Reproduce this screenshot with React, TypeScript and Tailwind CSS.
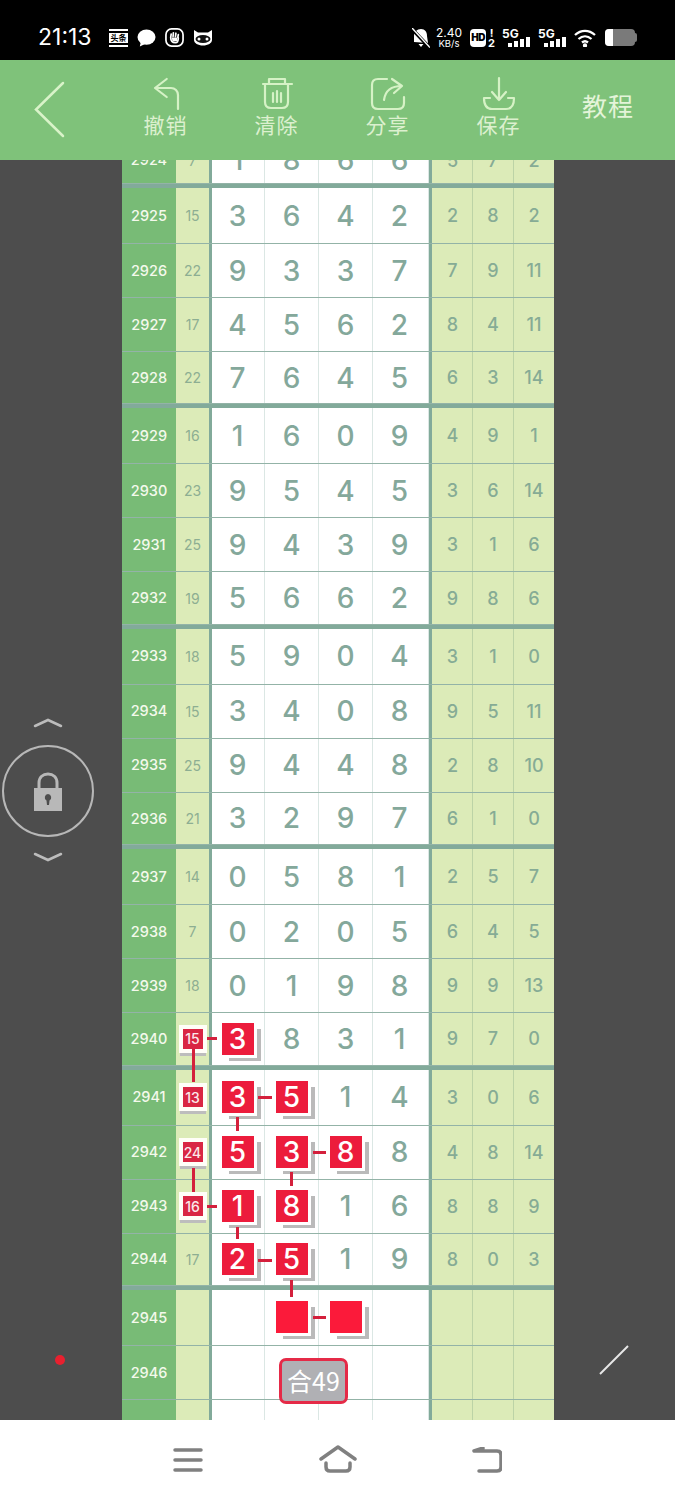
import type { ReactNode } from 'react'

const CJK = "font-['Noto_Sans_CJK_SC',sans-serif]"

type Row = { no: number; sum?: number; sumMark?: boolean; digits: (number | null)[]; marks?: number[]; right: (number | null)[] }

const r = (no: number, sum: number | undefined, d: (number | null)[], right: (number | null)[], marks: number[] = [], sumMark = false): Row => ({
  no,
  sum,
  sumMark,
  digits: d,
  marks,
  right,
})

const blank = [null, null, null, null]
const blankRight = [null, null, null]

const topRow = r(2924, 7, [1, 8, 6, 6], [5, 7, 2])

const groups: Row[][] = [
  [
    r(2925, 15, [3, 6, 4, 2], [2, 8, 2]),
    r(2926, 22, [9, 3, 3, 7], [7, 9, 11]),
    r(2927, 17, [4, 5, 6, 2], [8, 4, 11]),
    r(2928, 22, [7, 6, 4, 5], [6, 3, 14]),
  ],
  [
    r(2929, 16, [1, 6, 0, 9], [4, 9, 1]),
    r(2930, 23, [9, 5, 4, 5], [3, 6, 14]),
    r(2931, 25, [9, 4, 3, 9], [3, 1, 6]),
    r(2932, 19, [5, 6, 6, 2], [9, 8, 6]),
  ],
  [
    r(2933, 18, [5, 9, 0, 4], [3, 1, 0]),
    r(2934, 15, [3, 4, 0, 8], [9, 5, 11]),
    r(2935, 25, [9, 4, 4, 8], [2, 8, 10]),
    r(2936, 21, [3, 2, 9, 7], [6, 1, 0]),
  ],
  [
    r(2937, 14, [0, 5, 8, 1], [2, 5, 7]),
    r(2938, 7, [0, 2, 0, 5], [6, 4, 5]),
    r(2939, 18, [0, 1, 9, 8], [9, 9, 13]),
    r(2940, 15, [3, 8, 3, 1], [9, 7, 0], [0], true),
  ],
  [
    r(2941, 13, [3, 5, 1, 4], [3, 0, 6], [0, 1], true),
    r(2942, 24, [5, 3, 8, 8], [4, 8, 14], [0, 1, 2], true),
    r(2943, 16, [1, 8, 1, 6], [8, 8, 9], [0, 1], true),
    r(2944, 17, [2, 5, 1, 9], [8, 0, 3], [0, 1]),
  ],
  [
    r(2945, undefined, blank, blankRight, [1, 2]),
    r(2946, undefined, blank, blankRight),
    r(2947, undefined, blank, blankRight),
  ],
]

const rowH = ['h-[56px]', 'h-[54px]', 'h-[54px]', 'h-[52.4px]']
const digitW = ['w-[53px] pr-px', 'w-[54px]', 'w-[54px]', 'w-[56px] pr-[2px]']
const rightW = ['w-[41px] pl-px', 'w-[41px]', 'w-[40px]']

// connector lines between the tiles, by row then cell (sum column is "s")
const links: Record<number, Record<string, string[]>> = {
  2940: { s: ['left-[31px] top-[24px] h-[3px] w-[10px]', 'left-[16px] top-[36px] h-[33px] w-[3px]'] },
  2941: { 0: ['left-[46px] top-[26px] h-[3px] w-[14px]', 'left-[24px] top-[47px] h-[14px] w-[3px]'] },
  2942: {
    s: ['left-[16px] top-[42px] h-[24px] w-[3px]'],
    1: ['left-[48px] top-[25px] h-[3px] w-[13px]', 'left-[25px] top-[46px] h-[14px] w-[3px]'],
  },
  2943: {
    s: ['left-[31px] top-[25px] h-[3px] w-[10px]'],
    0: ['left-[24px] top-[47px] h-[12px] w-[3px]'],
  },
  2944: {
    0: ['left-[46px] top-[25px] h-[3px] w-[14px]'],
    1: ['left-[25px] top-[46px] h-[17px] w-[3px]'],
  },
  2945: { 1: ['left-[48px] top-[26px] h-[3px] w-[13px]'] },
}

function Links({ no, cell }: { no: number; cell: string }) {
  return (
    <>
      {(links[no]?.[cell] ?? []).map((c) => (
        <span key={c} className={`absolute z-20 bg-[#d4203c] ${c}`} />
      ))}
    </>
  )
}

// red tile with the grey offset shadow
function Mark({ value }: { value: number | null }) {
  return (
    <span
      className={`relative z-10 flex h-8 w-8 items-center justify-center text-[28px] font-medium text-white shadow-[0_0_0_3px_#fff,7px_6px_0_0_#bababa] ${
        value === null ? 'bg-[#fb1a3a]' : 'bg-[#ec1c3c]'
      }`}
    >
      {value}
    </span>
  )
}

function SumMark({ value }: { value: number }) {
  return (
    <span className="relative z-10 flex h-5 w-5 items-center justify-center bg-[#d92643] text-[14px] font-medium text-[#fbeaea] shadow-[0_0_0_4px_#fffef8,0_4px_0_3px_#bdbdbd]">
      {value}
    </span>
  )
}

function GridRow({ row, height }: { row: Row; height: string }) {
  const marked = row.marks ?? []
  return (
    <div className={`flex border-b border-[#93b3a7] ${height}`}>
      <div className="flex w-[54px] items-center justify-center bg-[#78bb76] text-[14.500px] font-medium text-[#f4f9ec]">{row.no}</div>
      <div className="relative flex w-[33px] items-center justify-center bg-[#dcebb8] text-[14px] text-[#8dae92]">
        {row.sumMark && row.sum !== undefined ? <SumMark value={row.sum} /> : row.sum}
        <Links no={row.no} cell="s" />
      </div>
      <div className="w-[3px] bg-[#82aa9a]" />
      {row.digits.map((d, i) => (
        <div key={i} className={`relative flex items-center justify-center border-r border-[#dbe7e4] bg-white text-[28px] font-medium text-[#84a89b] ${digitW[i]}`}>
          {marked.includes(i) ? <Mark value={d} /> : d}
          <Links no={row.no} cell={String(i)} />
          {row.no === 2946 && i === 1 && (
            <span className={`absolute left-[14px] top-[12px] z-20 flex h-[46px] w-[69px] items-center justify-center rounded-[7px] border-[3px] border-[#e52a47] bg-[#b0b0b4] text-[25px] font-normal leading-none text-white ${CJK}`}>
              合49
            </span>
          )}
        </div>
      ))}
      <div className="w-[3px] bg-[#82aa9a]" />
      {row.right.map((v, i) => (
        <div key={i} className={`flex items-center justify-center border-r border-[#bcd3a6] bg-[#dcebb8] text-[18px] font-medium text-[#86ab95] last:border-r-0 ${rightW[i]}`}>
          {v}
        </div>
      ))}
    </div>
  )
}

function ToolButton({ label, children }: { label: string; children: ReactNode }) {
  return (
    <div className="mb-2 flex w-[111px] flex-col items-center">
      <svg viewBox="0 0 36 36" className="h-9 w-9 fill-none stroke-[#d6f2c6] stroke-[2.2]" strokeLinecap="round" strokeLinejoin="round">
        {children}
      </svg>
      <span className={`-mt-px text-[21px] leading-[28px] tracking-[1px] text-[#dcf0cf] ${CJK}`}>{label}</span>
    </div>
  )
}

function Signal({ className }: { className: string }) {
  return (
    <div className={`relative h-[19px] w-[28px] ${className}`}>
      <span className="absolute left-0 top-0 text-[12px] font-bold leading-none">5G</span>
      <div className="absolute bottom-0 right-0 flex items-end gap-[2px]">
        <span className="h-[4px] w-[4px] bg-white" />
        <span className="h-[6px] w-[4px] bg-white" />
        <span className="h-[8px] w-[4px] bg-white" />
        <span className="h-[10px] w-[4px] bg-white" />
      </div>
    </div>
  )
}

function StatusBar() {
  return (
    <div className="flex h-[60px] items-center bg-black pl-[38px] pr-[38px] pt-[15px] text-white">
      <span className="w-[71px] text-[23px] font-normal leading-none">21:13</span>
      <div className="flex items-center gap-[9px]">
        <span className={`flex h-[18px] w-[19px] items-center justify-center border-y-2 border-white text-center text-[8px] font-bold leading-none text-black ${CJK}`}>
          <span className="flex h-[10px] w-full items-center justify-center bg-white">头条</span>
        </span>
        <svg viewBox="0 0 20 18" className="h-[18px] w-[19px] fill-white">
          <ellipse cx="10" cy="8" rx="9.500" ry="8" />
          <path d="M4 13 3 18 9 15Z" />
        </svg>
        <svg viewBox="0 0 20 20" className="h-[19px] w-[19px] fill-none stroke-white">
          <rect x="1" y="1" width="18" height="18" rx="6" strokeWidth="1.800" />
          <path d="M6 10 6.500 6.500M8.500 9 8.800 5M11 9 11.500 5.500M13.500 10 14 7M6 10c0 4 2 5.500 5 5.500 2 0 3-2 3-5" strokeWidth="1.800" strokeLinecap="round" />
          <path d="M7 10h6v4H8Z" fill="#fff" strokeWidth="0" />
        </svg>
        <svg viewBox="0 0 20 16" className="h-4 w-5">
          <path d="M1 0 5 2.500H15L19 0V10C19 13 15 15.500 10 15.500S1 13 1 10Z" fill="#fff" />
          <ellipse cx="10" cy="9" rx="7.500" ry="4" fill="#111" />
          <circle cx="6" cy="9" r="1.500" fill="#fff" />
          <circle cx="14" cy="9" r="1.500" fill="#fff" />
        </svg>
      </div>
      <div className="ml-auto flex items-center">
        <svg viewBox="0 0 18 20" className="h-5 w-[18px] fill-white">
          <path d="M2 14V8c0-4 3-7 7-7s6 3 6 7l1 7ZM6.500 16h5l-2.500 3Z" />
          <path d="M0 1 17 19" stroke="#000" strokeWidth="3.500" />
          <path d="M0 0 18 19.500" stroke="#fff" strokeWidth="1.500" />
        </svg>
        <div className="ml-[7px] flex w-[24px] flex-col items-center whitespace-nowrap text-[12px] leading-[11px]">
          <span>2.40</span>
          <span className="text-[9.500px]">KB/s</span>
        </div>
        <span className="ml-[9px] flex h-[18px] w-[16px] items-center justify-center rounded-[4px] bg-white text-[10px] font-black tracking-[-0.500px] text-black">HD</span>
        <div className="ml-[2px] flex w-[7px] flex-col text-[11px] font-bold leading-[10px]">
          <span className="text-center">!</span>
          <span>2</span>
        </div>
        <Signal className="ml-[7px]" />
        <Signal className="ml-[8px]" />
        <svg viewBox="0 0 22 18" className="ml-[8px] h-[18px] w-[22px] fill-none stroke-white stroke-[2.300]">
          <path d="M1 6C7 .5 15 .5 21 6M4.500 10c4-3.500 9-3.500 13 0M8 13.500c1.800-1.500 4.200-1.500 6 0" />
          <circle cx="11" cy="16.500" r="1" fill="#fff" />
        </svg>
        <div className="ml-[9px] flex h-[17px] w-[30px] overflow-hidden rounded-[4px] bg-[#7a7a7a]">
          <div className="w-[8px] bg-white" />
        </div>
        <div className="h-[9px] w-[2px] rounded-r-sm bg-[#7a7a7a]" />
      </div>
    </div>
  )
}

function Toolbar() {
  return (
    <div className="flex h-[100px] items-center bg-[#7fc27a]">
      <div className="flex w-[110px] items-center pl-[33px]">
        <svg viewBox="0 0 34 60" className="h-[60px] w-[34px] fill-none stroke-[#d9f3c9] stroke-[2.500]" strokeLinecap="round">
          <path d="M30 3 3 29.500 30 56" />
        </svg>
      </div>
      <ToolButton label="撤销">
        <path d="M18.700 4 7 13 18.700 22M7 13H23C27 13 30 16 30 20V34" />
      </ToolButton>
      <ToolButton label="清除">
        <path d="M4 9H33M10 9V4H26V9M6 10V27C6 31 8 33 12 33H23C27 33 29 31 29 27V10M14 18V27M18 16V27M22 18V27" />
      </ToolButton>
      <ToolButton label="分享">
        <path d="M17 4H8C4 4 2 6 2 10V28C2 32 4 34 8 34H28C32 34 34 32 34 28V22M22 4 32 11 24 18M32 11C20 11 15 17 14 25" />
      </ToolButton>
      <ToolButton label="保存">
        <path d="M18 3V25M11 17 18 25 25 17M3 23H9M27 23H33M3 23C3 30 6 34 11 34H25C30 34 33 30 33 23" />
      </ToolButton>
      <span className={`mb-2 ml-[24px] w-[60px] text-center text-[25px] tracking-[1px] text-[#e4f4d9] ${CJK}`}>教程</span>
    </div>
  )
}

function LeftRail() {
  return (
    <div className="relative flex w-[122px] flex-col items-start bg-[#4d4d4d] pl-[2px] pt-[558px]">
      <svg viewBox="0 0 30 12" className="ml-[31px] h-3 w-[30px] fill-none stroke-[#bcbcbc] stroke-[2.500]" strokeLinecap="round">
        <path d="M2 8 15 2 28 8" />
      </svg>
      <div className="mt-[15px] flex h-[92px] w-[92px] items-center justify-center rounded-full border-[2.500px] border-[#b7b7b7]">
        <svg viewBox="0 0 30 40" className="h-10 w-[30px] fill-[#b8b8b8]">
          <path d="M6 18V12C6 6 10 3 15 3S24 6 24 12V18" fill="none" stroke="#b8b8b8" strokeWidth="3" />
          <path fillRule="evenodd" d="M1 17H29V40H1ZM15 23A3.500 3.500 0 0 0 13.500 29.500L14 34H16L16.500 29.500A3.500 3.500 0 0 0 15 23Z" />
        </svg>
      </div>
      <svg viewBox="0 0 30 12" className="ml-[31px] mt-[14px] h-3 w-[30px] fill-none stroke-[#bcbcbc] stroke-[2.500]" strokeLinecap="round">
        <path d="M2 3 15 9 28 3" />
      </svg>
      <span className="ml-[53px] mt-[492px] h-[10px] w-[10px] rounded-full bg-[#e8202f]" />
    </div>
  )
}

function Table() {
  return (
    <div className="w-[432px] overflow-hidden">
      <div className="-mt-[23px] border-b-[4px] border-[#82aa9a]">
        <GridRow row={topRow} height="h-[47px]" />
      </div>
      {groups.map((g, gi) => (
        <div key={gi} className="border-b-[4px] border-[#82aa9a]">
          {g.map((row, i) => (
            <GridRow key={row.no} row={row} height={rowH[i]} />
          ))}
        </div>
      ))}
    </div>
  )
}

function RightRail() {
  return (
    <div className="flex flex-1 items-start bg-[#4d4d4d] pl-[44px] pt-[1184px]">
      <svg viewBox="0 0 32 32" className="h-8 w-8 stroke-[#e8e8e8] stroke-2">
        <path d="M2 30 30 2" />
      </svg>
    </div>
  )
}

function NavBar() {
  return (
    <div className="flex h-[80px] items-start bg-white pt-[28px]">
      <svg viewBox="0 0 30 24" className="ml-[173px] h-6 w-[30px] fill-none stroke-[#808080] stroke-[3.500]" strokeLinecap="round">
        <path d="M2 2H28M2 12H28M2 22H28" />
      </svg>
      <svg viewBox="0 0 38 30" className="ml-[116px] -mt-[3px] h-[30px] w-[38px] fill-none stroke-[#808080] stroke-[3.500]" strokeLinecap="round" strokeLinejoin="round">
        <path d="M2 14 19 2 36 14M7 18V22C7 25 9 26 11 26H27C29 26 31 25 31 22V18" />
      </svg>
      <svg viewBox="0 0 30 28" className="ml-[115px] -mt-[1px] h-7 w-[30px] fill-none stroke-[#808080] stroke-[3.500]" strokeLinecap="round" strokeLinejoin="round">
        <path d="M2 4H25C28 4 29 6 29 8V20C29 23 27 24 25 24H7M2 4 11 1" />
      </svg>
    </div>
  )
}

export default function App() {
  return (
    <div className="flex h-[1500px] w-[675px] flex-col overflow-hidden bg-black font-['Inter',sans-serif]">
      <StatusBar />
      <Toolbar />
      <div className="flex h-[1260px] overflow-hidden">
        <LeftRail />
        <Table />
        <RightRail />
      </div>
      <NavBar />
    </div>
  )
}
